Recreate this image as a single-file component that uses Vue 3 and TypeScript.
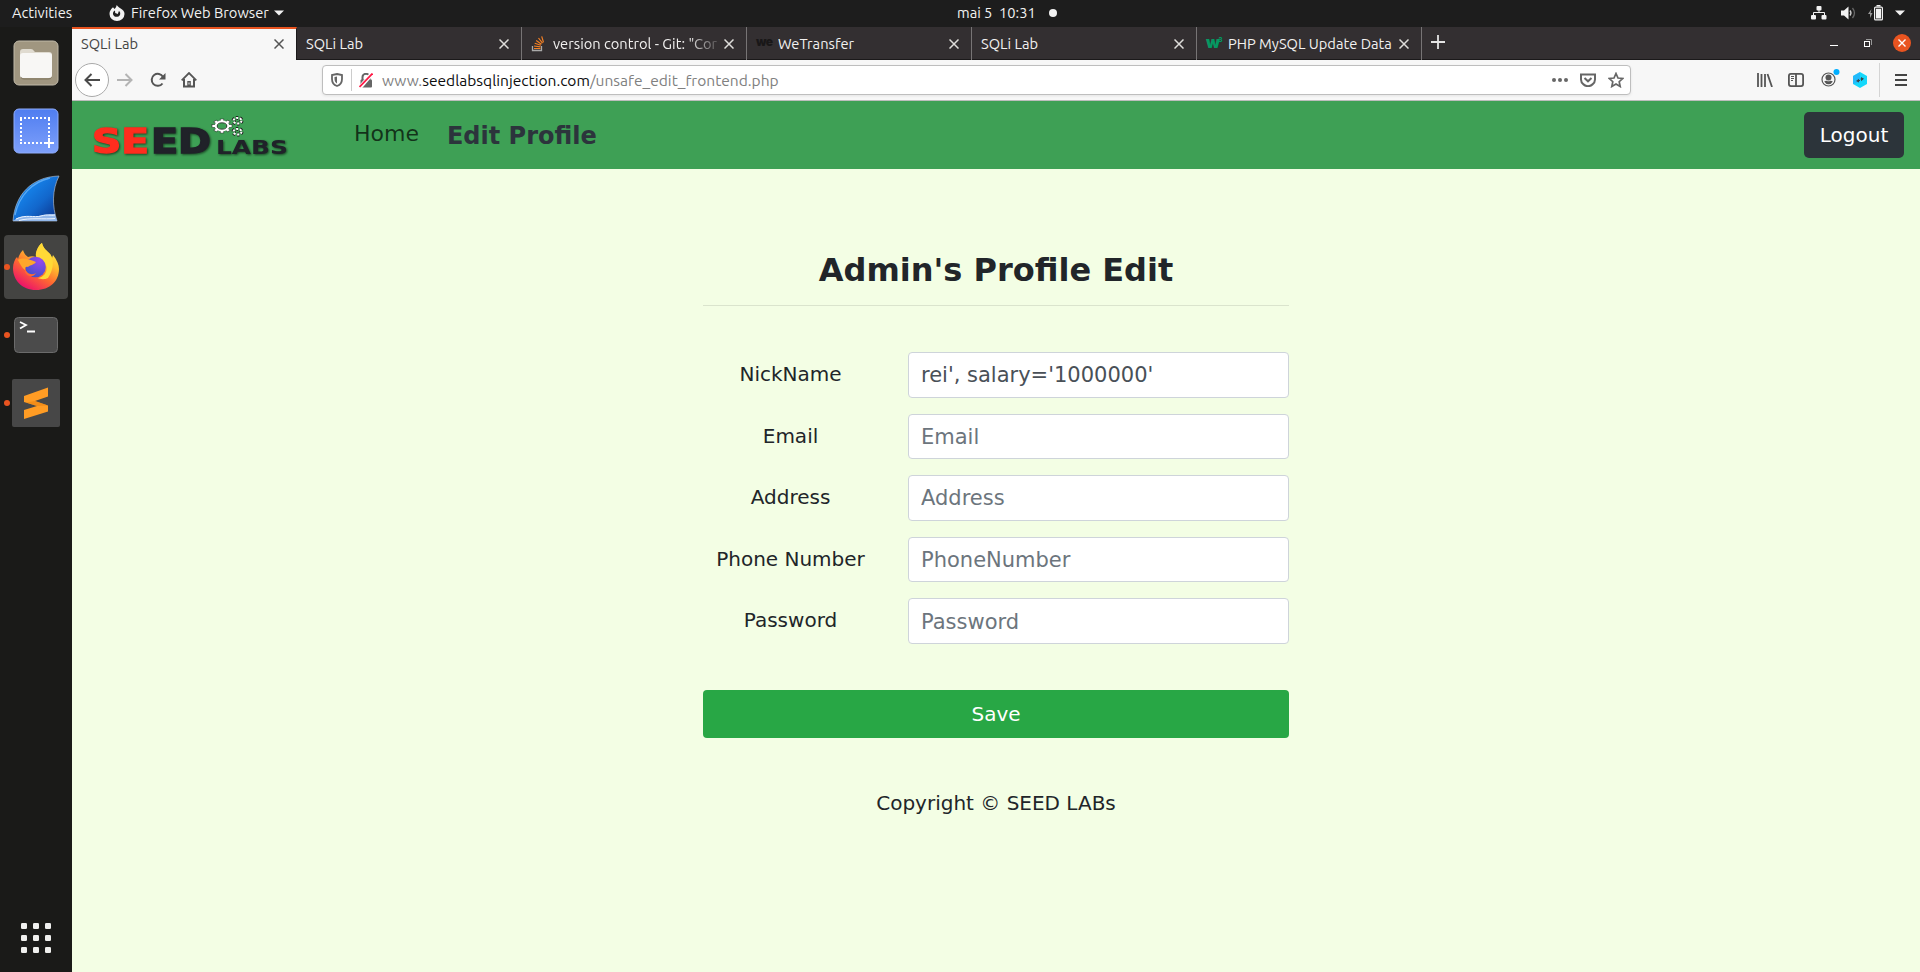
<script setup lang="ts">
import { ref } from 'vue'

interface Tab {
  title: string
  icon?: 'stack' | 'we' | 'w3'
  cls?: string
}

const tabs: Tab[] = [
  { title: 'SQLi Lab', cls: 'active' },
  { title: 'SQLi Lab' },
  { title: 'version control - Git: "Cor', icon: 'stack', cls: 'fade' },
  { title: 'WeTransfer', icon: 'we' },
  { title: 'SQLi Lab' },
  { title: 'PHP MySQL Update Data', icon: 'w3', cls: 'php' },
]

const fields = ref([
  { label: 'NickName', placeholder: 'NickName', value: "rei', salary='1000000'", type: 'text' },
  { label: 'Email', placeholder: 'Email', value: '', type: 'text' },
  { label: 'Address', placeholder: 'Address', value: '', type: 'text' },
  { label: 'Phone Number', placeholder: 'PhoneNumber', value: '', type: 'text' },
  { label: 'Password', placeholder: 'Password', value: '', type: 'password' },
])

const dots = [0, 12, 24]
const teeth = [0, 45, 90, 135, 180, 225, 270, 315]
</script>

<template>
  <div class="desktop">
    <header class="topbar">
      <span class="activities">Activities</span>
      <svg class="ff-mono" width="16" height="16" viewBox="0 0 16 16">
        <path d="M4 2.2 5.5 4C7 2.8 7.400 1.500 7.700 0c1.200 1.200 1.800 2.500 3.600 3.300C14 4.700 15.600 6.500 15.500 9a7.500 7 0 0 1-15 0C.500 6 1.700 4.500 4 2.200z" fill="#f2f2f2" />
        <path d="M6 5.600c-1 .200-2.400 2-2 3.700.500 1.900 2.300 2.800 4.200 2.500C10.300 11.500 11.600 9.800 11.200 7.700L10 5.800 8.800 8.900 6.200 8z" fill="#1d1d1d" />
      </svg>
      <span class="appname">Firefox Web Browser</span>
      <svg class="caret" width="10" height="6" viewBox="0 0 10 6"><path d="M0 .5h10L5 5.500z" fill="#f2f2f2" /></svg>
      <div class="clock"><span>mai 5&nbsp; 10:31</span><i class="dot"></i></div>
      <div class="tray">
        <svg width="16" height="14" viewBox="0 0 16 14" fill="#f2f2f2">
          <rect x="5.500" y="0" width="5" height="4.500" rx="1" /><rect x="0" y="9" width="5" height="4.500" rx="1" /><rect x="10.500" y="9" width="5" height="4.500" rx="1" />
          <path d="M2.500 9V6.500h11V9M8 4v3" fill="none" stroke="#f2f2f2" />
        </svg>
        <svg width="15" height="14" viewBox="0 0 15 14">
          <path d="M0 4.500h3L7.500.500v13L3 9.500H0z" fill="#f2f2f2" />
          <path d="M9 4.500q2 2.500 0 5" fill="none" stroke="#d0d0d0" stroke-width="1.300" /><path d="M11.500 2q4 5 0 10" fill="none" stroke="#666" stroke-width="1.300" />
        </svg>
        <svg width="16" height="16" viewBox="0 0 16 16">
          <path d="M3.500 4 0 9h2v4l2.500-5h-2z" fill="#999" />
          <rect x="6.600" y="2.100" width="7.800" height="12.800" rx="1" fill="none" stroke="#f2f2f2" stroke-width="1.200" /><path d="M8.500 0h4v1.500h-4zM8 3.700h5v9.800H8z" fill="#f2f2f2" />
        </svg>
        <svg class="tray-caret" width="10" height="6" viewBox="0 0 10 6"><path d="M0 .5h10L5 5.500z" fill="#f2f2f2" /></svg>
      </div>
    </header>

    <div class="workspace">
      <aside class="dock">
        <div class="slot">
          <svg width="46" height="46" viewBox="0 0 46 46">
            <rect x="1" y="1" width="44" height="44" rx="5" fill="#a09680" stroke="#c0b9a8" />
            <path d="M7 12q0-3 3-3h8q2 0 3 2l1 1h14q3 0 3 3v5H7z" fill="#e0dbd0" />
            <rect x="7" y="13" width="32" height="25" rx="3" fill="#f8f7f5" /><path d="M8 37.500q1 1.500 3 1.500h24q3 0 3.500-1.500" fill="none" stroke="#80765f" />
          </svg>
        </div>
        <div class="slot">
          <svg width="46" height="46" viewBox="0 0 46 46">
            <defs><linearGradient id="shot" x2="0" y2="1"><stop stop-color="#4f7df0" /><stop offset="1" stop-color="#7ea0fb" /></linearGradient></defs>
            <rect x="1" y="1" width="44" height="44" rx="5" fill="url(#shot)" stroke="#8fadfc" />
            <path d="M7 10h30M8 11v25M7 35h22M36 11v18" fill="none" stroke="#fff" stroke-width="2" stroke-dasharray="2 2" />
            <path d="M36 30v10M31 35h10" stroke="#fff" stroke-width="2" />
          </svg>
        </div>
        <div class="slot">
          <svg width="48" height="48" viewBox="0 0 48 48">
            <defs><linearGradient id="fin" x2="1" y2="1"><stop offset=".2" stop-color="#168af2" /><stop offset=".6" stop-color="#1267cc" /><stop offset="1" stop-color="#0a2c82" /></linearGradient></defs>
            <path d="M1 46C3 20 19 2 47 1c-7 14-7 30-2 45z" fill="url(#fin)" stroke="#a8b8cc" stroke-width=".7" />
            <path d="M3 40C7 21 20 7 38 3" fill="none" stroke="#5aaaf5" stroke-width="1.300" />
            <path d="M1 46c9-8 18-3 26-5s11-2 16-2l2 7z" fill="#92b7ea" /><path d="M4 44c10-5 18-1 25-3s9 0 14-1M7 45.500c10-3 26-1 36-2" fill="none" stroke="#eaf3ff" stroke-width="1" />
          </svg>
        </div>
        <div class="slot">
          <div class="running-bg">
            <svg class="firefox" width="46" height="47" viewBox="0 0 46 47">
              <defs>
                <linearGradient id="fox" x1=".85" y1=".05" x2=".25" y2="1"><stop stop-color="#fff44f" /><stop offset=".32" stop-color="#ffbf2e" /><stop offset=".6" stop-color="#ff6a30" /><stop offset="1" stop-color="#ea0a70" /></linearGradient>
                <radialGradient id="globe" cx=".7" cy=".2" r=".9"><stop stop-color="#9847ef" /><stop offset="1" stop-color="#3b53c8" /></radialGradient>
              </defs>
              <path d="M10 7c1 3 2 5 5 7 3-1 5-1 8 0-1-6 3-12 6-14 1 5 4 7 8 11 1 1 1 2 2 4l1-3c4 5 6 10 6 14 0 12-9 21-23 21S0 37 0 25c0-5 2-9 4-11l1 2c1-4 3-7 5-9z" fill="url(#fox)" />
              <path d="M29 0c1 5 4 7 8 11 5 6 3 17-2 24-4 2-8 1-10 0 9-2 11-11 6-16-3-4-9-4-8-8 1-5 3-9 6-11z" fill="#ffd936" />
              <circle cx="22.500" cy="24" r="10.300" fill="url(#globe)" />
              <path d="M5 17c5-3 10-1 18 2-2 3-6 3-8 5-2-1-3 0-3 3-3-2-5-6-7-10z" fill="#ffa62b" />
              <path d="M12 25c1 5 6 8 11 5-2 4-8 5-11-1z" fill="#ff6a32" />
            </svg>
          </div>
          <i class="pip"></i>
        </div>
        <div class="slot">
          <svg width="46" height="38" viewBox="0 0 46 38">
            <rect x="1.500" y="1.500" width="43" height="35" rx="4" fill="#4b4b4b" stroke="#6b6b6b" />
            <path d="M7 6l6 3-6 3.500M14 15.500h8" fill="none" stroke="#fff" stroke-width="1.800" />
          </svg>
          <i class="pip"></i>
        </div>
        <div class="slot">
          <svg width="48" height="48" viewBox="0 0 48 48">
            <rect width="48" height="48" rx="2" fill="#474747" />
            <path d="M12 17 36 8.500v9L23 22l13 4.500v6L12 40v-9l13-4-13-4z" fill="#ff9c24" /><path d="M14 23.500 23 22l13 4.500-11 .5z" fill="#e98411" opacity=".6" />
          </svg>
          <i class="pip"></i>
        </div>
        <svg class="apps" width="30" height="30" viewBox="0 0 30 30" fill="#f0f0ee">
          <template v-for="y in dots" :key="y"><rect v-for="x in dots" :key="x" :x="x" :y="y" width="6" height="6" rx="1.300" /></template>
        </svg>
      </aside>

      <section class="browser">
        <div class="tabbar">
          <div v-for="(t, i) in tabs" :key="i" class="tab" :class="t.cls">
            <svg v-if="t.icon === 'stack'" class="favicon" width="16" height="16" viewBox="0 0 16 16" fill="none">
              <path d="M1.500 10v4.500h9V10" stroke="#aaa" stroke-width="1.300" /><path d="M3 12.500h6.500M3 10l6.500.9M3.700 7.300l6.200 2M5.200 4.500l5.300 3.700M7.500 2l4 5.200M10.700.300l1.800 6" stroke="#f48024" stroke-width="1.200" />
            </svg>
            <span v-else-if="t.icon === 'we'" class="favicon we">we</span>
            <span v-else-if="t.icon === 'w3'" class="favicon w3">w<sup>3</sup></span>
            <span class="title">{{ t.title }}</span>
            <svg class="close" width="10" height="10" viewBox="0 0 10 10"><path d="M.5.500l9 9M9.500.500l-9 9" stroke="currentColor" stroke-width="1.500" /></svg>
          </div>
          <svg class="newtab" width="14" height="14" viewBox="0 0 14 14"><path d="M7 0v14M0 7h14" stroke="#e4e4e4" stroke-width="1.800" /></svg>
          <div class="window-buttons">
            <svg width="8" height="14" viewBox="0 0 8 14"><path d="M0 9.500h8" stroke="#fff" /></svg>
            <svg width="8" height="8" viewBox="0 0 8 8" fill="none"><path d="M2 .500h5.500V6" stroke="#999" /><rect x=".5" y="2.500" width="5" height="5" stroke="#fff" /></svg>
            <svg width="18" height="18" viewBox="0 0 18 18"><circle cx="9" cy="9" r="9" fill="#e95420" /><path d="M5.500 5.500l7 7M12.500 5.500l-7 7" stroke="#fff" stroke-width="1.400" /></svg>
          </div>
        </div>

        <div class="toolbar">
          <span class="back"><svg width="16" height="14" viewBox="0 0 16 14"><path d="M7.500 1 1.500 7l6 6M1.500 7H16" fill="none" stroke="#4b4b4b" stroke-width="2" /></svg></span>
          <svg class="fwd" width="16" height="14" viewBox="0 0 16 14"><path d="M8.500 1l6 6-6 6M14.500 7H0" fill="none" stroke="#b4b4b4" stroke-width="2" /></svg>
          <svg class="reload" width="16" height="16" viewBox="0 0 16 16"><path d="M12.500 11.500A6 6 0 1 1 13 5" fill="none" stroke="#555" stroke-width="2" /><path d="M15.500 1v6.500H9z" fill="#555" /></svg>
          <svg class="home" width="16" height="16" viewBox="0 0 16 16"><path d="M.7 8.300 8 1l7.300 7.300" fill="none" stroke="#555" stroke-width="1.800" /><path d="M3 7v7.500h10V7" fill="none" stroke="#555" stroke-width="2" /><path d="M6.300 9h3.500v5.500H6.300z" fill="#555" /><path d="M8 10.500v2" stroke="#f7f7f7" /></svg>
          <div class="urlbar">
            <svg class="shield" width="12" height="14" viewBox="0 0 12 14"><path d="M6 1 11 2v4c0 3-2 6-5 7-3-1-5-4-5-7V2z" fill="none" stroke="#666" stroke-width="1.800" /><path d="M6 3.500v7C4.500 9.500 3.500 8 3.500 6V4z" fill="#666" /></svg>
            <i class="sep"></i>
            <svg class="lock" width="14" height="15" viewBox="0 0 14 15"><path d="M3.500 7V4a3.500 3.200 0 0 1 7 0v3" fill="none" stroke="#666" stroke-width="2" /><rect x="1.500" y="6.500" width="11.500" height="8" rx="1" fill="#666" /><path d="M1 14.500 13 .500" stroke="#fff" stroke-width="4" /><path d="M.5 14 13.500.500" stroke="#ff1744" stroke-width="1.800" /></svg>
            <span class="url">www.<b>seedlabsqlinjection.com</b>/unsafe_edit_frontend.php</span>
            <svg class="more" width="16" height="4" viewBox="0 0 16 4" fill="#666"><circle cx="2" cy="2" r="2" /><circle cx="8" cy="2" r="2" /><circle cx="14" cy="2" r="2" /></svg>
            <svg class="pocket" width="16" height="14" viewBox="0 0 16 14" fill="none" stroke="#666" stroke-width="2"><path d="M1 1.500h14V6.500q0 3-2.500 4.900Q8 15 3.500 11.400 1 9.500 1 6.500z" /><path d="M4.500 5 8 8.300 11.500 5" /></svg>
            <svg class="star" width="16" height="16" viewBox="0 0 16 16"><path d="M8 1.500l2 4.500 4.800.5-3.600 3.200 1 4.800L8 12l-4.200 2.500 1-4.800L1.200 6.500 6 6z" fill="none" stroke="#666" stroke-width="1.700" /></svg>
          </div>
          <div class="actions">
            <svg width="16" height="14" viewBox="0 0 16 14" fill="none" stroke="#555" stroke-width="1.800"><path d="M1 0v14M4.500 1v13M8 1v13M10.500 1l4.500 13" /></svg>
            <svg width="16" height="14" viewBox="0 0 16 14" fill="none" stroke="#555" stroke-width="1.800"><rect x=".9" y=".9" width="14.200" height="12.200" rx="2" /><path d="M8 1v12" /><path d="M3 3.500h3M3 5.500h3M3 7.500h2" stroke-width="1" /></svg>
            <svg class="account" width="19" height="18" viewBox="0 0 19 18"><circle cx="7.500" cy="10.500" r="6.500" fill="none" stroke="#555" stroke-width="1.200" /><circle cx="7.500" cy="8.500" r="3" fill="#555" /><path d="M3.200 12.500q1.500-1 2.500-.8 1.800 1 3.600 0 1-.2 2.500.8-1.500 2.700-4.300 2.700t-4.300-2.700z" fill="#555" /><circle cx="15.500" cy="3" r="3" fill="#00aeff" /></svg>
            <svg class="hex" width="16" height="16" viewBox="0 0 16 16"><path d="M8 0l7 4v8l-7 4-7-4V4z" fill="#14d8fb" /><path d="M8 0 1 4v8l7-2z" fill="#2ba6fb" opacity=".6" /><path d="M4 9l3-2.200v3.700zM12 6.800 9 5v4.200z" fill="#37474f" /><path d="M6 8.500h2M8.500 7h2" stroke="#37474f" /></svg>
            <i class="bar"></i>
            <svg class="menu" width="12" height="12" viewBox="0 0 12 12"><path d="M0 1h12M0 6h12M0 11h12" stroke="#444" stroke-width="1.900" /></svg>
          </div>
        </div>

        <main class="page">
          <nav class="navbar">
            <svg class="logo" width="200" height="44" viewBox="0 0 200 44">
              <g class="wordmark">
                <text class="seed red" x="3" y="40.300" textLength="57" lengthAdjust="spacingAndGlyphs">SE</text>
                <text class="seed" x="62" y="40.300" textLength="60" lengthAdjust="spacingAndGlyphs">ED</text>
                <text class="labs" x="127" y="41" textLength="72" lengthAdjust="spacingAndGlyphs">LABS</text>
              </g>
              <g transform="translate(133 13)">
                <g v-for="a in teeth" :key="a" :transform="`scale(1 .7) rotate(${a})`"><rect x="-1.800" y="-10" width="3.600" height="4" fill="#fff" stroke="#222" stroke-width=".6" /></g>
                <ellipse rx="6.200" ry="4.300" fill="none" stroke="#fff" stroke-width="2.300" /><ellipse rx="4.800" ry="3.200" fill="none" stroke="#222" stroke-width=".8" />
              </g>
              <g fill="none" stroke-dasharray="2 1.600"><g stroke="#222" stroke-width="4"><ellipse cx="148.500" cy="7.700" rx="4" ry="2.800" /><ellipse cx="148.500" cy="18.700" rx="4" ry="2.800" /></g><g stroke="#fff" stroke-width="2"><ellipse cx="148.500" cy="7.700" rx="4" ry="2.800" /><ellipse cx="148.500" cy="18.700" rx="4" ry="2.800" /></g></g>
            </svg>
            <a class="link">Home</a>
            <a class="link current">Edit Profile</a>
            <button class="logout">Logout</button>
          </nav>

          <form class="profile" @submit.prevent>
            <h2>Admin's Profile Edit</h2>
            <hr />
            <div v-for="f in fields" :key="f.label" class="row">
              <label>{{ f.label }}</label>
              <input v-model="f.value" :type="f.type" :placeholder="f.placeholder" spellcheck="false" />
            </div>
            <button class="save">Save</button>
            <p class="copyright">Copyright © SEED LABs</p>
          </form>
        </main>
      </section>
    </div>
  </div>
</template>

<style>
body { margin: 0; overflow: hidden; }
</style>

<style scoped>
* { box-sizing: border-box; }
svg { display: block; flex: none; }
.desktop { width: 1920px; height: 972px; display: flex; flex-direction: column; font: 14.670px/20px Ubuntu, "Noto Sans", sans-serif; background: #1a1a18; }
.topbar { height: 27px; flex: none; display: flex; align-items: center; background: #1d1d1d; color: #f2f2f2; position: relative; padding: 0 0 1px 12px; white-space: nowrap; }
.activities { width: 97px; }
.ff-mono { margin-top: -1px; }
.appname { margin-left: 6px; width: 137px; }
.caret { margin-left: 6px; }
.clock { position: absolute; left: 957px; top: 3px; display: flex; align-items: center; }
.clock span { width: 79px; }
.dot { width: 8px; height: 8px; border-radius: 50%; background: #f2f2f2; margin-left: 13px; }
.tray { margin-left: auto; margin-right: 15px; display: flex; align-items: center; gap: 13px; }
.tray svg:first-child { margin-right: 1px; }
.tray svg:nth-child(2) { margin-right: -1px; }
.tray-caret { margin-left: -2px; }
.workspace { flex: 1; display: flex; min-height: 0; }
.dock { width: 72px; flex: none; display: flex; flex-direction: column; padding-top: 2px; background: #1a1a18; }
.slot { height: 68px; flex: none; display: flex; align-items: center; justify-content: center; position: relative; }
.running-bg { width: 64px; height: 64px; border-radius: 4px; background: #444442; display: flex; align-items: center; justify-content: center; }
.firefox { margin-top: -2px; }
.pip { position: absolute; left: 4px; top: 31px; width: 6px; height: 6px; border-radius: 50%; background: #e95420; }
.apps { margin: auto 0 19px 21px; }
.browser { width: 1848px; display: flex; flex-direction: column; }
.tabbar { height: 33px; flex: none; display: flex; align-items: center; background: #332f31; border-bottom: 1px solid #1b191a; color: #f2f1f0; }
.tab { width: 225px; height: 33px; display: flex; align-items: center; padding: 1px 12px 0 9px; border-right: 1px solid #777475; white-space: nowrap; }
.tab.active { background: #f7f7f7; border-top: 2px solid #e95420; border-right-color: #1b191a; color: #444; padding-top: 0; }
.title { flex: 1; min-width: 0; overflow: hidden; }
.fade .title { -webkit-mask-image: linear-gradient(90deg, #000 80%, rgba(0, 0, 0, .15)); mask-image: linear-gradient(90deg, #000 80%, rgba(0, 0, 0, .15)); }
.close { margin-left: 5px; color: #deddda; }
.active .close { color: #555; }
.favicon { width: 16px; flex: none; }
.tab .favicon { margin-right: 6px; }
.we { font: 900 12px/14px Inter, sans-serif; color: #191718; letter-spacing: -.6px; padding-bottom: 4px; }
.w3 { font: 900 16px/14px Inter, sans-serif; color: #059862; white-space: nowrap; padding-bottom: 3px; letter-spacing: -1.500px; }
.w3 sup { font-size: 6px; line-height: 0; vertical-align: 6px; }
.newtab { margin: -2px 0 0 9px; }
.window-buttons { margin-left: auto; display: flex; align-items: center; margin-right: 9px; gap: 26px; }
.window-buttons svg:last-child { margin-left: -5px; }
.toolbar { height: 41px; flex: none; background: #f7f7f7; border-bottom: 1px solid #bdbdbd; display: flex; align-items: center; }
.back { width: 34px; height: 34px; border: 1px solid #aaa; border-radius: 50%; background: #fff; margin-left: 3px; display: flex; align-items: center; justify-content: center; }
.fwd { margin-left: 8px; }
.reload { margin-left: 17px; }
.home { margin-left: 15px; }
.urlbar { margin-left: 125px; width: 1309px; height: 30px; border: 1px solid #bebebe; border-radius: 4px; background: #fff; display: flex; align-items: center; padding: 0 6px 0 8px; box-shadow: 0 1px 3px rgba(0, 0, 0, .08); }
.sep { width: 1px; height: 22px; background: #ccc; margin: 0 7px 0 8px; }
.url { margin-left: 9px; margin-top: 1px; font-size: 15.550px; color: #808080; white-space: nowrap; }
.url b { font-weight: 400; color: #0c0c0d; }
.more { margin-left: auto; }
.pocket { margin-left: 12px; }
.star { margin-left: 12px; }
.actions { display: flex; align-items: center; margin-left: auto; margin-right: 13px; }
.actions svg + svg { margin-left: 15px; }
.actions .account { margin-top: -4px; margin-left: 17px; }
.actions .hex { margin-left: 12px; }
.bar { width: 1px; height: 34px; background: #d4d4d4; margin: 0 15px 0 11px; }
.page { flex: 1; background: #f3fee4; font-family: "DejaVu Sans", sans-serif; color: #212529; }
.navbar { height: 68px; background: #3ea055; display: flex; align-items: center; padding: 0 16px 0 17px; }
.logo { overflow: visible; }
.wordmark { filter: drop-shadow(1px 1px 1px rgba(10, 30, 15, .7)); }
.seed { font: 700 33.500px "DejaVu Sans", sans-serif; fill: #202229; stroke: #202229; stroke-width: 1.400px; }
.labs { font: 700 20px "DejaVu Sans", sans-serif; fill: #202229; }
.seed.red { fill: #ff2d1e; stroke: #ff2d1e; }
.link { font-size: 22px; line-height: 30px; color: rgba(0, 0, 0, .7); margin-left: 65px; margin-top: -2px; }
.link.current { font-size: 24px; font-weight: 700; color: #2c343c; margin-left: 28px; margin-top: 2px; }
.logout { margin-left: auto; width: 100px; height: 46px; border: 0; border-radius: 5px; background: #2c343a; color: #fff; font: 20px "DejaVu Sans", sans-serif; padding: 0; }
.profile { width: 586px; margin: 0 auto; padding-top: 82px; }
h2 { margin: 0; font-size: 32px; line-height: 38px; font-weight: 700; text-align: center; }
hr { margin: 16px 0 46px; border: 0; border-top: 1px solid #dae4cd; }
.row { display: flex; height: 45.600px; margin-bottom: 16px; }
label { width: 175px; margin-right: 30px; font-size: 20px; line-height: 45px; text-align: center; }
input { width: 381px; height: 45.600px; border: 1px solid #ced4da; border-radius: 4px; background: #fff; color: #495057; font: 21px "DejaVu Sans", sans-serif; padding: 1px 12px 0; outline: 0; }
input::placeholder { color: #6c757d; opacity: 1; }
.save { display: block; width: 100%; height: 48px; margin-top: 46px; border: 0; border-radius: 4px; background: #28a745; color: #fff; font: 20px "DejaVu Sans", sans-serif; }
.copyright { margin: 50px 0 0; text-align: center; font-size: 20px; line-height: 30px; }
</style>
